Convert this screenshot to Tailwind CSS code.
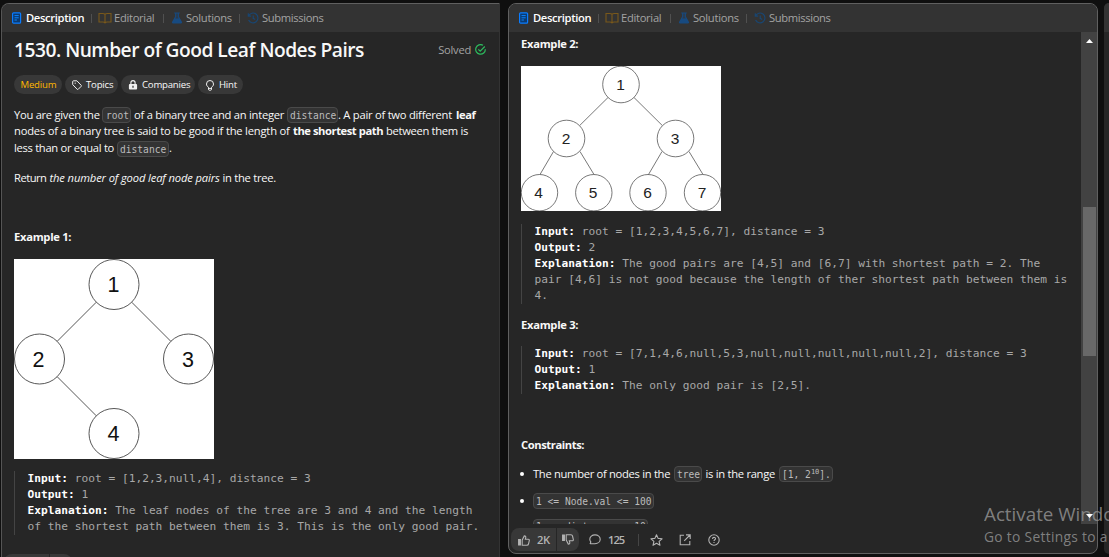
<!DOCTYPE html>
<html lang="en">
<head>
<meta charset="utf-8">
<title>1530. Number of Good Leaf Nodes Pairs</title>
<script src="https://cdn.jsdelivr.net/npm/@tailwindcss/browser@4"></script>
</head>
<body class="w-[1109px] h-[557px] overflow-hidden bg-[#0f0f0f] font-['Open_Sans',sans-serif] text-[11.2px] tracking-[-0.025em] text-[#f8f8f8] whitespace-nowrap">
<svg class="hidden">
  <symbol id="doc" viewBox="0 0 12 12"><rect x="1.6" y=".8" width="8" height="10.4" rx="1" fill="#0b3a70" stroke="#0a7cff" stroke-width="1.2"/><path d="M3.5 3.6h4.2M3.5 5.8h4.2M3.5 8h2.4" stroke="#0a84ff" fill="none"/></symbol>
  <symbol id="book" viewBox="0 0 14 12"><path d="M7 2.4C6.4 1.7 5.6 1.5 4.8 1.5H1v8.5h3.9c.9 0 1.6.2 2.1.8.5-.6 1.2-.8 2.1-.8H13V1.5H9.2C8.4 1.5 7.6 1.7 7 2.4zM7 2.4v8.2" fill="none" stroke="#79581b" stroke-width="1.1"/></symbol>
  <symbol id="flask" viewBox="0 0 12 12"><path d="M3.3.6h5.4v1h-.8v2.9l3 5.3c.4.9 0 1.7-.9 1.7H2c-.9 0-1.3-.8-.9-1.7l3-5.3V1.6h-.8z" fill="#174a80"/><path d="M5.2 1.6h1.6v3.2l1 1.8H4.2l1-1.8z" fill="#2b3a4b"/></symbol>
  <symbol id="hist" viewBox="0 0 12 12"><path d="M1.3 1.3v2.9h2.9M1.5 4.100A4.900 4.900 0 1 1 1.600 8M6.200 3.500v2.800l2 1.200" fill="none" stroke="#194672" stroke-width="1.200"/></symbol>
</svg>
<div class="flex h-[557px] w-[1109px] overflow-hidden pt-[3px] relative">
  <!-- left panel -->
  <section class="ml-px w-[499px] shrink-0 h-[570px] bg-[#262626] border-t border-l border-r border-t-[#606060] border-l-[#555] border-r-[#333] rounded-tl-lg overflow-hidden">
    <header class="h-[28px] bg-[#333] flex items-center pl-[10px] text-[#a3a3a3]">
      <svg class="w-3 h-3 -ml-px"><use href="#doc"/></svg><span class="ml-[3px] w-[65px] font-semibold text-white tracking-[-0.03em]">Description</span>
      <i class="w-px h-[9px] bg-[#505050]"></i><svg class="ml-[6px] w-[14px] h-3"><use href="#book"/></svg><span class="ml-[2px] w-[49px] tracking-[-0.027em]">Editorial</span>
      <i class="w-px h-[9px] bg-[#505050]"></i><svg class="ml-[7px] w-3 h-3"><use href="#flask"/></svg><span class="ml-[3px] w-[53px]">Solutions</span>
      <i class="w-px h-[9px] bg-[#505050]"></i><svg class="ml-[7px] w-3 h-3"><use href="#hist"/></svg><span class="ml-[3px] tracking-[-0.032em]">Submissions</span>
    </header>
    <div class="pl-[12px] pr-[13px]">
      <div class="flex items-center justify-between h-[36px]">
        <h1 class="text-[19.2px] font-semibold tracking-[-0.026em]">1530. Number of Good Leaf Nodes Pairs</h1>
        <span class="flex items-center gap-[4px] text-[#a3a3a3]">Solved
          <svg class="w-[11px] h-[11px]" viewBox="0 0 11 11" fill="none" stroke="#2cbb5d" stroke-width="1.2"><path d="M8 1.3A4.8 4.8 0 1 0 10.3 5.2M3.3 5.3l1.900 1.900 4.600-4.700"/></svg></span>
      </div>
      <div class="flex mt-[7px] gap-[3px] h-[19px] text-[9.6px] tracking-[-0.022em] [&>span]:rounded-full [&>span]:bg-[#383838] [&>span]:flex [&>span]:items-center [&>span]:pt-px">
        <span class="w-[48px] pl-[6.5px] text-[#ffb700]">Medium</span>
        <span class="w-[53px] pl-[7px] gap-[4px]"><svg class="w-[10px] h-[10px] -mt-px" viewBox="0 0 10 10" fill="none" stroke="#f0f0f0"><path d="M.7 1.5v3.1l4.500 4.700c.4.300.7.300 1 0l3-3c.3-.3.3-.7 0-1L4.900.8H1.500c-.5 0-.8.300-.8.700z"/><circle cx="3.2" cy="3.2" r=".6" fill="#f0f0f0" stroke="none"/></svg>Topics</span>
        <span class="w-[74px] pl-[7px] gap-[4px]"><svg class="w-[10px] h-[10px]" viewBox="0 0 10 10"><rect x=".9" y="4" width="8.2" height="5.6" rx="1" fill="#f0f0f0"/><path d="M2.9 4.3V2.7a2.1 2.1 0 0 1 4.2 0v1.600" fill="none" stroke="#f0f0f0" stroke-width="1.1"/><path d="M5 5.8v2" stroke="#383838" stroke-width="1.3"/></svg>Companies</span>
        <span class="w-[45px] pl-[7px] gap-[4px]"><svg class="w-[10px] h-[11px]" viewBox="0 0 10 11" fill="none" stroke="#f0f0f0"><path d="M3.5 7.3C2.2 6.4 1.5 5.4 1.5 4a3.500 3.500 0 0 1 7 0c0 1.400-.7 2.400-2 3.300v1.900c0 .7-.4 1.100-1.100 1.100h-.8c-.7 0-1.100-.4-1.100-1.100zM3.700 8.400h2.600"/></svg>Hint</span>
      </div>
      <div class="mt-[13px] [&_code]:font-['DejaVu_Sans_Mono',monospace] [&_code]:text-[9.6px] [&_code]:tracking-normal [&_code]:text-[#bcbcbc] [&_code]:bg-[#333] [&_code]:border [&_code]:border-[#4a4a4a] [&_code]:rounded-[4px] [&_code]:h-[16px] [&_code]:leading-[15px] [&_code]:pl-[2px]">
        <p class="flex items-center h-[16px]"><span class="w-[88px]">You are given the</span><code class="w-[29px] pl-[3px]!">root</code><span class="ml-[3px] w-[153px] tracking-[-0.023em]">of a binary tree and an integer</span><code class="w-[51px]">distance</code><span class="w-[118px] tracking-[-0.022em]">. A pair of two different</span><b class="tracking-[-0.036em]">leaf</b></p>
        <p class="flex items-center h-[17px]"><span class="w-[279px] tracking-[-0.018em]">nodes of a binary tree is said to be good if the length of</span><b class="w-[93px] tracking-[-0.039em]">the shortest path</b><span class="tracking-[-0.028em]">between them is</span></p>
        <p class="flex items-center h-[17px]"><span class="w-[103px] tracking-[-0.027em]">less than or equal to</span><code class="w-[52px]">distance</code><span>.</span></p>
        <p class="flex items-center h-[17px] mt-[13px]"><span class="w-[35.5px] tracking-[-0.045em]">Return</span><em class="w-[173px] tracking-[-0.012em]">the number of good leaf node pairs</em><span>in the tree.</span></p>
      </div>
      <p class="mt-[41px] h-[17px] leading-[17px] font-bold">Example 1:</p>
      <svg class="block mt-[14px] w-[200px] h-[200px] bg-white" viewBox="0 0 200 200" font-family="Liberation Sans" font-size="21.5" letter-spacing="0" text-anchor="middle">
        <g fill="none" stroke="#444" stroke-width=".9"><circle cx="100" cy="25.5" r="25"/><circle cx="25.5" cy="100" r="25"/><circle cx="174.5" cy="100" r="25"/><circle cx="100" cy="174.5" r="25"/><path d="M82.3 43.2 43.2 82.3M117.7 43.2l39.1 39.1M43.2 117.7l39.1 39.1"/></g>
        <g fill="#111"><text x="99.500" y="33">1</text><text x="24.500" y="108">2</text><text x="174" y="108">3</text><text x="99.500" y="182">4</text></g>
      </svg>
      <div class="mt-[12px] border-l border-[#444] pl-[12.5px] font-['DejaVu_Sans_Mono',monospace] tracking-[0.007px] leading-[16px] text-[#a8a8a8] [&_b]:text-white">
        <p><b>Input:</b> root = [1,2,3,null,4], distance = 3</p>
        <p><b>Output:</b> 1</p>
        <p><b>Explanation:</b> The leaf nodes of the tree are 3 and 4 and the length</p>
        <p>of the shortest path between them is 3. This is the only good pair.</p>
      </div>
    </div>
    <div class="mt-[19px] ml-[2px] flex gap-px"><i class="w-[45px] h-6 rounded-l-lg bg-[#383838]"></i><i class="w-[22px] h-6 rounded-r-lg bg-[#383838]"></i></div>
  </section>

  <!-- right panel -->
  <section class="ml-[8px] w-[590px] shrink-0 h-[551px] bg-[#262626] border border-[#606060] rounded-lg overflow-hidden flex flex-col">
    <header class="h-[28px] shrink-0 bg-[#333] flex items-center pl-[8px] text-[#a3a3a3]">
      <svg class="w-3 h-3 ml-px"><use href="#doc"/></svg><span class="ml-[3px] w-[65px] font-semibold text-white tracking-[-0.03em]">Description</span>
      <i class="w-px h-[9px] bg-[#505050]"></i><svg class="ml-[6px] w-[14px] h-3"><use href="#book"/></svg><span class="ml-[2px] w-[49px] tracking-[-0.027em]">Editorial</span>
      <i class="w-px h-[9px] bg-[#505050]"></i><svg class="ml-[7px] w-3 h-3"><use href="#flask"/></svg><span class="ml-[3px] w-[53px]">Solutions</span>
      <i class="w-px h-[9px] bg-[#505050]"></i><svg class="ml-[7px] w-3 h-3"><use href="#hist"/></svg><span class="ml-[3px] tracking-[-0.032em]">Submissions</span>
    </header>
    <div class="flex h-[492px] shrink-0">
      <div class="w-[572px] pl-[12px] h-[492px] overflow-hidden">
        <p class="mt-[3px] h-[17px] leading-[17px] font-bold">Example 2:</p>
        <svg class="block mt-[14px] w-[200px] h-[145px] bg-white" viewBox="0 0 200 145" font-family="Liberation Sans" font-size="15.5" letter-spacing="0" text-anchor="middle">
          <g fill="none" stroke="#555" stroke-width=".8"><circle cx="100" cy="18.5" r="18.3"/><circle cx="45.5" cy="72.5" r="18.3"/><circle cx="154.5" cy="72.5" r="18.3"/><circle cx="18.5" cy="126.7" r="18.2"/><circle cx="72.8" cy="126.7" r="18.2"/><circle cx="127" cy="126.7" r="18.2"/><circle cx="181.5" cy="126.7" r="18.2"/><path d="M87 31.5 58.7 59.5M113 31.5l28.3 28M32.5 85.5l-13.5 23M59 85.5l14 23M141 85.5l-13.5 23M168 85.5l14 23"/></g>
          <g fill="#222"><text x="99.500" y="24">1</text><text x="45" y="78">2</text><text x="154" y="78">3</text><text x="17.500" y="132">4</text><text x="72" y="132">5</text><text x="126.500" y="132">6</text><text x="181" y="132">7</text></g>
        </svg>
        <div class="mt-[13px] border-l border-[#444] pl-[12.5px] font-['DejaVu_Sans_Mono',monospace] tracking-[0.007px] leading-[16px] text-[#a8a8a8] [&_b]:text-white">
          <p><b>Input:</b> root = [1,2,3,4,5,6,7], distance = 3</p>
          <p><b>Output:</b> 2</p>
          <p><b>Explanation:</b> The good pairs are [4,5] and [6,7] with shortest path = 2. The</p>
          <p>pair [4,6] is not good because the length of ther shortest path between them is</p>
          <p>4.</p>
        </div>
        <p class="mt-[12px] h-[17px] leading-[17px] font-bold">Example 3:</p>
        <div class="mt-[13px] border-l border-[#444] pl-[12.5px] font-['DejaVu_Sans_Mono',monospace] tracking-[0.007px] leading-[16px] text-[#a8a8a8] [&_b]:text-white">
          <p><b>Input:</b> root = [7,1,4,6,null,5,3,null,null,null,null,null,2], distance = 3</p>
          <p><b>Output:</b> 1</p>
          <p><b>Explanation:</b> The only good pair is [2,5].</p>
        </div>
        <p class="mt-[42px] h-[17px] leading-[17px] font-bold tracking-[-0.037em]">Constraints:</p>
        <ul class="mt-[13px] [&_code]:block [&_code]:font-['DejaVu_Sans_Mono',monospace] [&_code]:text-[9.6px] [&_code]:tracking-normal [&_code]:text-[#bcbcbc] [&_code]:bg-[#333] [&_code]:border [&_code]:border-[#4a4a4a] [&_code]:rounded-[4px] [&_code]:h-[16px] [&_code]:leading-[15px] [&_code]:pl-[2px]">
          <li class="flex items-center h-[16px]"><i class="w-1 h-1 rounded-full bg-white mr-[9px] -ml-px"></i><span class="w-[141px] tracking-[-0.027em]">The number of nodes in the</span><code class="w-[28px]">tree</code><span class="ml-[3.5px] w-[73.5px]">is in the range</span><code class="w-[54px]">[1, 2<sup class="text-[7px] -top-[4px] leading-none">10</sup>].</code></li>
          <li class="flex items-center h-[16px] mt-[11px]"><i class="w-1 h-1 rounded-full bg-white mr-[9px] -ml-px"></i><code class="w-[121px]">1 &lt;= Node.val &lt;= 100</code></li>
          <li class="flex items-center h-[16px] mt-[10px]"><i class="w-1 h-1 mr-[9px] -ml-px"></i><code class="w-[115px] leading-[14px]!">1 &lt;= distance &lt;= 10</code></li>
        </ul>
      </div>
      <div class="w-[16px] bg-[#424242] flex flex-col items-center">
        <svg class="mt-[7px] w-[7px] h-[4px] shrink-0" viewBox="0 0 7 4"><path d="M3.5 0 7 4H0z" fill="#fff"/></svg>
        <i class="mt-[164px] w-[13px] h-[149px] bg-[#686868]"></i>
      </div>
    </div>
    <footer class="flex items-center pl-[2px] mt-[4px] h-[23px] text-[#b3b3b3] font-semibold">
      <span class="w-[45px] h-[23px] rounded-l-lg bg-[#383838] flex items-center pl-[7px] pt-px">
        <svg class="w-[12px] h-[11px] mr-[7px]" viewBox="0 0 12 11" fill="none" stroke="#b3b3b3" stroke-width="1.1"><path d="M.6 4.5h1.8v5.5H.6z" fill="#b3b3b3"/><path d="M4.2 5 6.3.9c1.2 0 1.7.8 1.4 1.9l-.4 1.5h2.9c.9 0 1.3.6 1.1 1.4l-.8 3.3c-.2.8-.7 1.2-1.5 1.2H4.200z"/></svg>2K</span>
      <span class="ml-px w-[22px] h-[23px] rounded-r-lg bg-[#383838] flex items-center justify-center"><svg class="w-[12px] h-[11px] rotate-180 -scale-x-100" viewBox="0 0 12 11" fill="none" stroke="#b3b3b3" stroke-width="1.1"><path d="M9.6 4.5h1.8v5.5H9.600z" fill="#b3b3b3" transform="translate(12 0) scale(-1 1)"/><path d="M4.2 5 6.3.9c1.2 0 1.7.8 1.4 1.9l-.4 1.5h2.9c.9 0 1.3.6 1.1 1.4l-.8 3.3c-.2.8-.7 1.2-1.5 1.2H4.200z"/></svg></span>
      <svg class="ml-[10px] w-[12px] h-[11px]" viewBox="0 0 12 11" fill="none" stroke="#b3b3b3" stroke-width="1.1"><path d="M1.2 9.9l.6-2A4.2 4.2 0 0 1 .8 5.3C.8 2.8 3.1.9 6 .9s5.2 1.9 5.2 4.4S8.9 9.7 6 9.7H1.200z"/></svg>
      <span class="ml-[7px] w-[16px] pt-px tracking-[-0.09em]">125</span>
      <i class="ml-[14px] w-px h-[12px] bg-[#454545]"></i>
      <svg class="ml-[11px] w-[13px] h-[12px]" viewBox="0 0 13 12" fill="none" stroke="#b3b3b3" stroke-width="1.1" stroke-linejoin="round"><path d="m6.5.8 1.6 3.6 4 .4-3 2.6.9 3.9-3.5-2-3.5 2 .9-3.9-3-2.600 4-.4z"/></svg>
      <svg class="ml-[16px] w-[12px] h-[12px]" viewBox="0 0 12 12" fill="none" stroke="#b3b3b3" stroke-width="1.1"><path d="M5 1.2H1.2v9.6h9.6V7M7 .9h4.2V5M11 1 5.2 6.800"/></svg>
      <svg class="ml-[17px] w-[12px] h-[12px]" viewBox="0 0 12 12" fill="none" stroke="#b3b3b3" stroke-width="1.1"><circle cx="6" cy="6" r="5.2"/><path d="M4.5 4.9c0-2 3-2 3-.2C7.5 5.8 6 5.7 6 7M6 8v1"/></svg>
    </footer>
  </section>
  <section class="ml-[6px] w-[5px] shrink-0 h-[551px] bg-[#262626] rounded-tl-lg rounded-bl-lg overflow-hidden"><i class="block h-[29px] bg-[#333]"></i></section>

  <!-- desktop watermark, with the scroll arrow above it -->
  <div class="absolute left-[984px] top-[501px] w-[125px] overflow-hidden text-[#8b8b8b]/90">
    <p class="text-[18.8px] leading-[26px] tracking-[0]">Activate Windo</p>
    <p class="text-[13.8px] leading-[20px] tracking-[0.022em]">Go to Settings to a</p>
  </div>
  <svg class="absolute left-[1086px] top-[514px] w-[7px] h-[4px]" viewBox="0 0 7 4"><path d="M3.5 4 7 0H0z" fill="#fff"/></svg>
</div>
</body>
</html>
